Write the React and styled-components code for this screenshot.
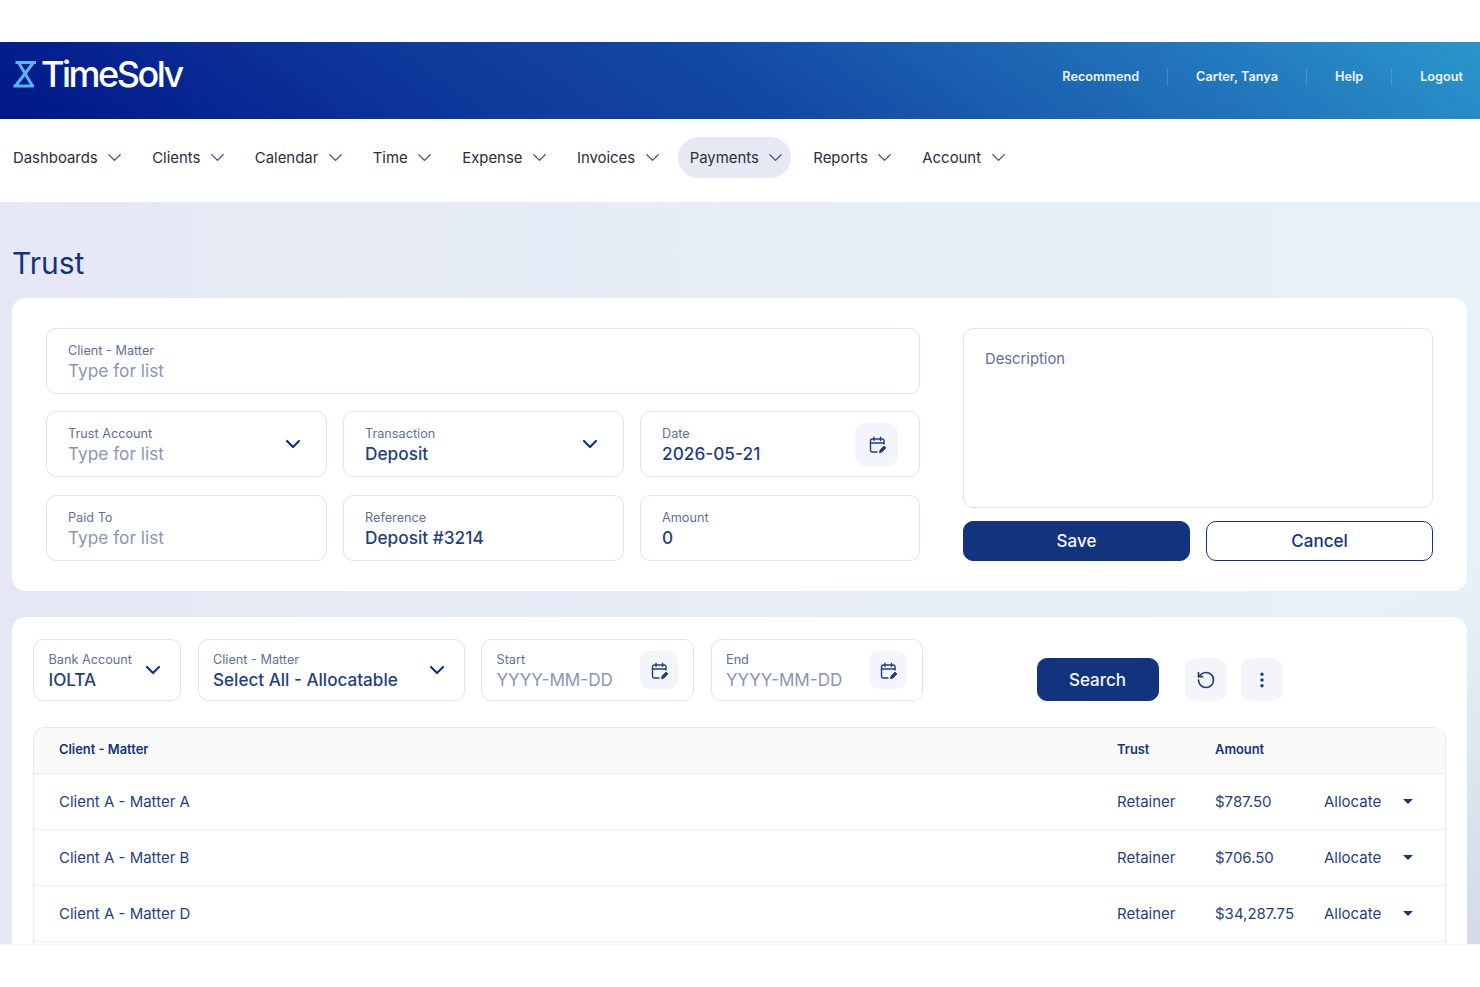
import styled, { createGlobalStyle } from 'styled-components';
import { ChevronDown, RotateCcw, EllipsisVertical } from 'lucide-react';

const navy = '#12347f';
const ink = '#1f3f80';
const muted = '#5f7096';
const line = '#dfe4f0';

const GlobalStyle = createGlobalStyle`
    html, body {
        margin: 0;
        background: #fff;
    }
    * {
        box-sizing: border-box;
    }
    body {
        font-family: Inter, "Liberation Sans", sans-serif;
    }
`;

const Page = styled.div`
    display: flex;
    flex-direction: column;
    height: 987px;
    padding-top: 42px;
    overflow: hidden;
`;

const Header = styled.header`
    display: flex;
    flex: none;
    align-items: center;
    justify-content: space-between;
    height: 77px;
    padding: 0 17px 0 12px;
    background: linear-gradient(35deg, #001689 0%, #0f3a9c 32%, #1348a4 50%, #2172ba 78%, #2a96cc 100%);
`;

const Logo = styled.div`
    display: flex;
    align-items: center;
    gap: 4px;
    margin-top: -14px;
    color: #fff;
    font-size: 36px;
    font-weight: 500;
    letter-spacing: -2.5px;
`;

const HeaderLinks = styled.nav`
    display: flex;
    align-items: center;
    margin-top: -7px;
`;

const HeaderLink = styled.a`
    padding: 1px 28px;
    border-left: ${(p) => (p.$first ? 'none' : '1px solid rgba(255, 255, 255, 0.16)')};
    color: #eef4fb;
    font-size: 12.7px;
    font-weight: 600;
    line-height: 16px;
    &:last-child {
        padding-right: 0;
    }
`;

const NavBar = styled.nav`
    display: flex;
    flex: none;
    align-items: center;
    gap: 10px;
    height: 83px;
    padding: 0 1px 6px;
    background: #fff;
`;

const NavItem = styled.a`
    display: flex;
    align-items: center;
    gap: 5.5px;
    height: 41px;
    padding: 0 4px 0 12px;
    border-radius: 21px;
    background: ${(p) => (p.$active ? '#e6e9f3' : 'transparent')};
    color: #2a2e3a;
    font-size: 14.9px;
    svg {
        color: #34507f;
    }
`;

const Content = styled.main`
    flex: none;
    height: 743px;
    padding: 0 13px 0 12px;
    overflow: hidden;
    background:
        linear-gradient(to bottom right, transparent 74%, #d2dbe6 100%),
        linear-gradient(to right, #e5e8f4 0%, #e6edf7 50%, #e7f2f8 100%);
    border-bottom: 1px solid #f4f5f8;
`;

const Title = styled.h1`
    margin: 0;
    padding: 42px 0 15px 0;
    color: ${navy};
    font-size: 30px;
    font-weight: 400;
    line-height: 39px;
`;

const Card = styled.section`
    border-radius: 14px;
    background: #fff;
`;

const FormCard = styled(Card)`
    display: grid;
    grid-template-columns: 874px 470px;
    justify-content: space-between;
    height: 293px;
    padding: 30px 34px;
`;

const FieldGrid = styled.div`
    display: grid;
    grid-template-columns: 281px 281px 280px;
    grid-template-rows: 66px 67px 66px;
    gap: 17px 16px;
`;

const Field = styled.div`
    display: flex;
    align-items: center;
    align-self: start;
    justify-content: space-between;
    grid-column: ${(p) => (p.$wide ? '1 / -1' : 'auto')};
    min-width: 0;
    height: ${(p) => (p.$small ? '62px' : '66px')};
    padding: ${(p) => (p.$small ? '0 15px 0 14.5px' : '0 21px')};
    border: 1.5px solid ${line};
    border-radius: 10px;
    background: #fff;
`;

const FieldText = styled.div`
    display: flex;
    flex-direction: column;
    min-width: 0;
    padding-top: 3px;
`;

const Label = styled.span`
    color: ${muted};
    font-size: 12.7px;
    line-height: 16px;
`;

const Value = styled.span`
    color: ${(p) => (p.$empty ? '#8a96b0' : ink)};
    font-size: ${(p) => (p.$small ? '17.1px' : '17.25px')};
    font-weight: ${(p) => (p.$empty ? 400 : 500)};
    line-height: 24px;
    white-space: nowrap;
`;

const SideColumn = styled.div`
    display: flex;
    flex-direction: column;
    gap: 13px;
`;

const Description = styled.div`
    flex: 1;
    padding: 20px 21px;
    border: 1.5px solid ${line};
    border-radius: 10px;
    color: ${muted};
    font-size: 14.8px;
    line-height: 20px;
`;

const ButtonRow = styled.div`
    display: grid;
    grid-template-columns: 1fr 1fr;
    gap: 16px;
`;

const Button = styled.button`
    height: ${(p) => (p.$search ? '43px' : '40px')};
    width: ${(p) => (p.$search ? '122px' : 'auto')};
    border: 1.5px solid ${navy};
    border-radius: 10px;
    background: ${(p) => (p.$outline ? '#fff' : navy)};
    color: ${(p) => (p.$outline ? navy : '#f2f5fb')};
    font-family: inherit;
    font-size: 17px;
    font-weight: 500;
`;

const IconButton = styled.button`
    display: flex;
    flex: none;
    align-items: center;
    justify-content: center;
    width: ${(p) => p.$size || 42}px;
    height: ${(p) => p.$size || 43}px;
    padding: 0;
    border: none;
    border-radius: 10px;
    background: #f3f5fb;
    color: ${ink};
`;

const ListCard = styled(Card)`
    margin-top: 26px;
    padding: 22px 21px 0;
    height: 400px;
`;

const Filters = styled.div`
    display: flex;
    align-items: flex-end;
    height: 62px;
`;

const FilterFields = styled.div`
    display: grid;
    grid-template-columns: 148px 267px 213px 212px;
    grid-auto-rows: 62px;
    gap: 16.5px;
`;

const FilterActions = styled.div`
    display: flex;
    align-items: center;
    gap: 14px;
    height: 43px;
    margin-left: 114px;
`;

const SearchSlot = styled.div`
    margin-right: 12px;
`;

const Table = styled.div`
    margin-top: 26px;
    border: 1.5px solid #e7eaf1;
    border-bottom: none;
    border-radius: 12px 12px 0 0;
    overflow: hidden;
`;

const Row = styled.div`
    display: grid;
    grid-template-columns: 1fr 98px 109px 79px 42px;
    align-items: center;
    height: ${(p) => (p.$head ? '46px' : '56px')};
    padding: ${(p) => (p.$head ? '0 0 2px 25px' : '0 0 0 25px')};
    border-bottom: 1.5px solid #e9ecf2;
    background: ${(p) => (p.$head ? '#fafafb' : '#fff')};
    color: ${(p) => (p.$head ? navy : ink)};
    font-size: ${(p) => (p.$head ? '12.9px' : '15px')};
    font-weight: ${(p) => (p.$head ? 600 : 400)};
`;

const Caret = styled.span`
    width: 0;
    height: 0;
    border-top: 5px solid ${navy};
    border-left: 5px solid transparent;
    border-right: 5px solid transparent;
`;

const Hourglass = () => (
    <svg width="25" height="28" viewBox="0 0 25 28" fill="none" stroke="#55b6ee" strokeWidth="3">
        <path d="M3.5 2.5 H24 M6.5 2.5 L20.5 26 M21.5 2.5 L3.5 26 M1.5 26 H22" />
    </svg>
);

const CalendarPen = () => (
    <svg width="18" height="18" viewBox="-1 -1 18 18" overflow="visible" fill="none" stroke="#1f3f80" strokeWidth="1.4" strokeLinecap="round" strokeLinejoin="round">
        <path d="M8 16 H3.2 A1.7 1.7 0 0 1 1.5 14.3 V4.7 A1.7 1.7 0 0 1 3.2 3 H13.3 A1.7 1.7 0 0 1 15 4.7 V8" />
        <path d="M5 1.2 V4.5 M11.5 1.2 V4.5 M1.5 7 H15" />
        <path d="M10.5 16.4 L11 14 L15 10 L17 12 L13 16 Z" fill="#1f3f80" strokeWidth="0.8" />
    </svg>
);

const navItems = ['Dashboards', 'Clients', 'Calendar', 'Time', 'Expense', 'Invoices', 'Payments', 'Reports', 'Account'];
const rows = [
    ['Client A - Matter A', '$787.50'],
    ['Client A - Matter B', '$706.50'],
    ['Client A - Matter D', '$34,287.75'],
];

const SelectField = ({ label, value, empty, small }) => (
    <Field $small={small}>
        <FieldText>
            <Label>{label}</Label>
            <Value $empty={empty} $small={small}>{value}</Value>
        </FieldText>
        <ChevronDown size={24} strokeWidth={2.2} color={navy} />
    </Field>
);

const TextField = ({ label, value, empty, wide }) => (
    <Field $wide={wide}>
        <FieldText>
            <Label>{label}</Label>
            <Value $empty={empty}>{value}</Value>
        </FieldText>
    </Field>
);

const DateField = ({ label, value, empty, small }) => (
    <Field $small={small}>
        <FieldText>
            <Label>{label}</Label>
            <Value $empty={empty} $small={small}>{value}</Value>
        </FieldText>
        <IconButton $size={small ? 38 : 43}>
            <CalendarPen />
        </IconButton>
    </Field>
);

export default function App() {
    return (
        <Page>
            <GlobalStyle />
            <Header>
                <Logo>
                    <Hourglass />
                    TimeSolv
                </Logo>
                <HeaderLinks>
                    <HeaderLink $first>Recommend</HeaderLink>
                    <HeaderLink>Carter, Tanya</HeaderLink>
                    <HeaderLink>Help</HeaderLink>
                    <HeaderLink>Logout</HeaderLink>
                </HeaderLinks>
            </Header>
            <NavBar>
                {navItems.map((item) => (
                    <NavItem key={item} $active={item === 'Payments'}>
                        {item}
                        <ChevronDown size={23} strokeWidth={1.4} />
                    </NavItem>
                ))}
            </NavBar>
            <Content>
                <Title>Trust</Title>
                <FormCard>
                    <FieldGrid>
                        <TextField wide label="Client - Matter" value="Type for list" empty />
                        <SelectField label="Trust Account" value="Type for list" empty />
                        <SelectField label="Transaction" value="Deposit" />
                        <DateField label="Date" value="2026-05-21" />
                        <TextField label="Paid To" value="Type for list" empty />
                        <TextField label="Reference" value="Deposit #3214" />
                        <TextField label="Amount" value="0" />
                    </FieldGrid>
                    <SideColumn>
                        <Description>Description</Description>
                        <ButtonRow>
                            <Button>Save</Button>
                            <Button $outline>Cancel</Button>
                        </ButtonRow>
                    </SideColumn>
                </FormCard>
                <ListCard>
                    <Filters>
                        <FilterFields>
                            <SelectField small label="Bank Account" value="IOLTA" />
                            <SelectField small label="Client - Matter" value="Select All - Allocatable" />
                            <DateField small label="Start" value="YYYY-MM-DD" empty />
                            <DateField small label="End" value="YYYY-MM-DD" empty />
                        </FilterFields>
                        <FilterActions>
                            <SearchSlot>
                                <Button $search>Search</Button>
                            </SearchSlot>
                            <IconButton>
                                <RotateCcw size={20} strokeWidth={2} />
                            </IconButton>
                            <IconButton>
                                <EllipsisVertical size={20} strokeWidth={2.2} />
                            </IconButton>
                        </FilterActions>
                    </Filters>
                    <Table>
                        <Row $head>
                            <span>Client - Matter</span>
                            <span>Trust</span>
                            <span>Amount</span>
                        </Row>
                        {rows.map(([name, amount]) => (
                            <Row key={name}>
                                <span>{name}</span>
                                <span>Retainer</span>
                                <span>{amount}</span>
                                <span>Allocate</span>
                                <Caret />
                            </Row>
                        ))}
                        <Row />
                    </Table>
                </ListCard>
            </Content>
        </Page>
    );
}
